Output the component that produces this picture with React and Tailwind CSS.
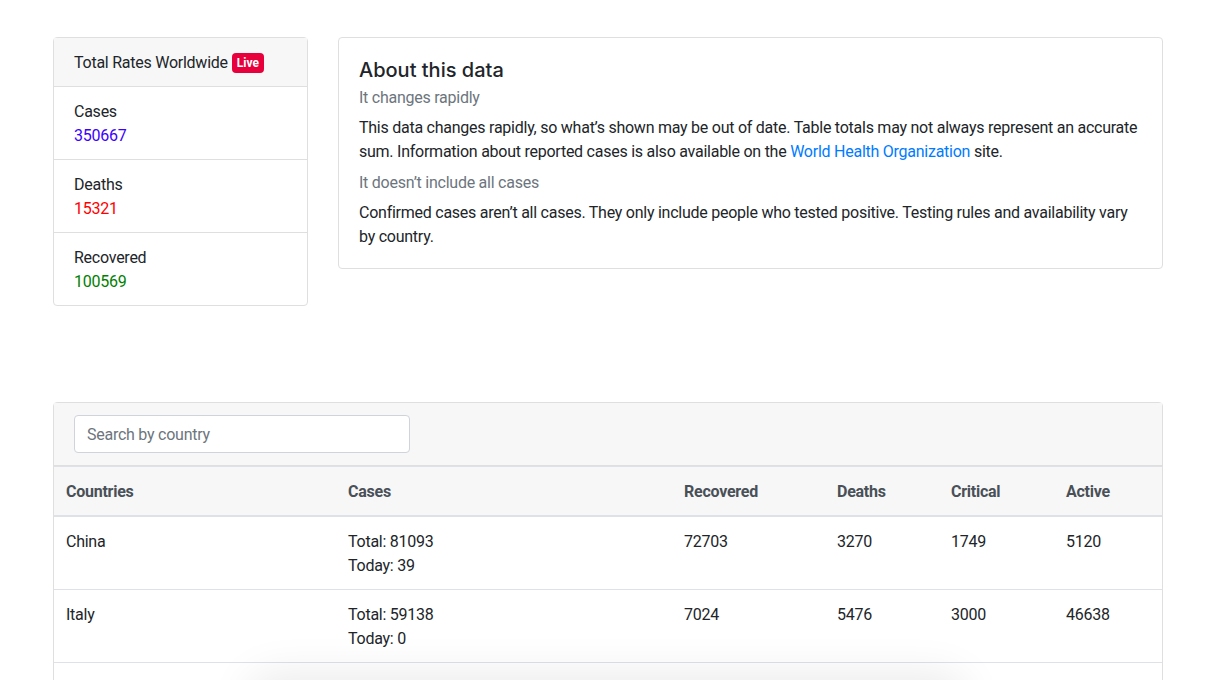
import React from 'react';

const countries = [
  { name: 'China', total: 81093, today: 39, recovered: 72703, deaths: 3270, critical: 1749, active: 5120 },
  { name: 'Italy', total: 59138, today: 0, recovered: 7024, deaths: 5476, critical: 3000, active: 46638 },
  { name: 'USA', total: 35224, today: 1563, recovered: 178, deaths: 471, critical: 795, active: 34575 },
];

const cell = 'px-3 pt-[13px] pb-[11px] border-b border-[#dee2e6]';
const head = 'px-3 pt-[13px] pb-[11px] font-bold border-t border-b-2 border-[#dee2e6]';

export default function App() {
  return (
    <div className="relative min-h-screen bg-white text-[#212529] font-['Roboto','Liberation_Sans',sans-serif] text-base leading-6 tracking-[-0.25px] overflow-hidden">
      <div className="ml-[53px] w-[1110px] pt-[38px]">
        {/* Top row */}
        <div className="flex items-start gap-[30px]">
          <div className="w-[255px] border border-[#dfdfdf] rounded -mt-px">
            <div className="bg-[#f7f7f7] px-5 pt-[13px] pb-[11px] border-b border-[#dfdfdf] flex items-center">
              Total Rates Worldwide
              <span className="ml-1 bg-[#e8003d] text-white text-[12px] font-bold leading-none tracking-normal px-[5px] py-[4px] rounded">Live</span>
            </div>
            <div className="px-5 pt-[13px] pb-[11px] border-b border-[#dfdfdf]">
              <div>Cases</div>
              <div className="text-[#3a00ff]">350667</div>
            </div>
            <div className="px-5 pt-[13px] pb-[11px] border-b border-[#dfdfdf]">
              <div>Deaths</div>
              <div className="text-[#ff0000]">15321</div>
            </div>
            <div className="px-5 pt-[13px] pb-[11px]">
              <div>Recovered</div>
              <div className="text-[#008000]">100569</div>
            </div>
          </div>

          <div className="flex-1 border border-[#dfdfdf] rounded px-5 pt-5 pb-5 -mt-px">
            <h5 className="font-['Inter','Liberation_Sans',sans-serif] tracking-normal text-[20px] leading-6 font-medium">About this data</h5>
            <div className="mt-[4px] text-[#6c757d]">It changes rapidly</div>
            <p className="mt-[6px]">
              This data changes rapidly, so what’s shown may be out of date. Table totals may not always represent an accurate sum. Information about reported cases is also available on the{' '}
              <a href="#" className="text-[#007bff]">World Health Organization</a> site.
            </p>
            <div className="mt-[7px] text-[#6c757d]">It doesn’t include all cases</div>
            <p className="mt-[6px] mb-[-1px]">
              Confirmed cases aren’t all cases. They only include people who tested positive. Testing rules and availability vary by country.
            </p>
          </div>
        </div>

        {/* Table card */}
        <div className="mt-[96px] border border-[#dfdfdf] rounded">
          <div className="bg-[#f7f7f7] px-5 py-3 border-b border-[#dfdfdf]">
            <input
              type="text"
              placeholder="Search by country"
              className="w-[336px] h-[38px] px-3 bg-white border border-[#ced4da] rounded placeholder:text-[#6c757d] outline-none"
            />
          </div>
          <table className="w-full border-collapse text-left">
            <thead>
              <tr className="bg-[#f7f7f7] text-[#495057]">
                <th className={`w-[282px] ${head}`}>Countries</th>
                <th className={`w-[336px] ${head}`}>Cases</th>
                <th className={`w-[153px] ${head}`}>Recovered</th>
                <th className={`w-[114px] ${head}`}>Deaths</th>
                <th className={`w-[115px] ${head}`}>Critical</th>
                <th className={head}>Active</th>
              </tr>
            </thead>
            <tbody>
              {countries.map((c) => (
                <tr key={c.name} className="align-top">
                  <td className={cell}>{c.name}</td>
                  <td className={cell}>
                    <div>Total: {c.total}</div>
                    <div>Today: {c.today}</div>
                  </td>
                  <td className={cell}>{c.recovered}</td>
                  <td className={cell}>{c.deaths}</td>
                  <td className={cell}>{c.critical}</td>
                  <td className={cell}>{c.active}</td>
                </tr>
              ))}
            </tbody>
          </table>
        </div>
      </div>

      {/* floating panel just below the fold, only its shadow shows */}
      <div className="absolute left-[262px] top-[688px] w-[690px] h-[60px] bg-white rounded-lg shadow-[0_0_45px_12px_rgba(0,0,0,0.09)]" />
    </div>
  );
}
